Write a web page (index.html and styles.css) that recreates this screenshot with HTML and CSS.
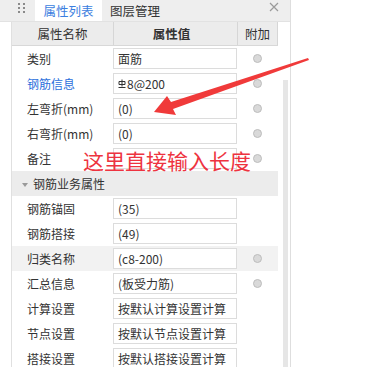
FILE: index.html
```html
<!DOCTYPE html>
<html lang="zh-CN">
<head>
    <meta charset="UTF-8">
    <title>属性列表</title>
    <link rel="stylesheet" href="styles.css">
</head>
<body>
    <div class="panel">
        <div class="tabbar">
            <div class="handle"><i></i><i></i><i></i><i></i><i></i><i></i></div>
            <div class="tab active">属性列表</div>
            <div class="tab">图层管理</div>
            <svg class="close" width="10" height="10" viewBox="0 0 10 10">
                <path d="M1 1L9 9M9 1L1 9" stroke="#9a9a9a" stroke-width="1.2" fill="none"/>
            </svg>
        </div>
        <div class="content">
            <div class="gutter"></div>
            <div class="grid">
                <div class="head">
                    <div class="hcell">属性名称</div>
                    <div class="hcell bold">属性值</div>
                    <div class="hcell last">附加</div>
                </div>
                <div class="row">
                    <div class="name">类别</div>
                    <div class="val"><div class="box">面筋</div></div>
                    <div class="extra"><span class="dot"></span></div>
                </div>
                <div class="row">
                    <div class="name link">钢筋信息</div>
                    <div class="val"><div class="box"><svg class="grade" width="8" height="11" viewBox="0 0 8 11"><path d="M4 0.5V7.5M1 2.5H7V5.5H1Z M0.5 8.5H7.5" stroke="#333" stroke-width="1" fill="none"/></svg>8@200</div></div>
                    <div class="extra"><span class="dot"></span></div>
                </div>
                <div class="row">
                    <div class="name">左弯折(mm)</div>
                    <div class="val"><div class="box">(0)</div></div>
                    <div class="extra"><span class="dot"></span></div>
                </div>
                <div class="row">
                    <div class="name">右弯折(mm)</div>
                    <div class="val"><div class="box">(0)</div></div>
                    <div class="extra"><span class="dot"></span></div>
                </div>
                <div class="row">
                    <div class="name">备注</div>
                    <div class="val"><div class="box"></div></div>
                    <div class="extra"><span class="dot"></span></div>
                </div>
                <div class="group">
                    <span class="caret"></span>钢筋业务属性
                </div>
                <div class="row">
                    <div class="name">钢筋锚固</div>
                    <div class="val"><div class="box">(35)</div></div>
                    <div class="extra"></div>
                </div>
                <div class="row">
                    <div class="name">钢筋搭接</div>
                    <div class="val"><div class="box">(49)</div></div>
                    <div class="extra"></div>
                </div>
                <div class="row hover">
                    <div class="name">归类名称</div>
                    <div class="val"><div class="box">(c8-200)</div></div>
                    <div class="extra"><span class="dot"></span></div>
                </div>
                <div class="row">
                    <div class="name">汇总信息</div>
                    <div class="val"><div class="box">(板受力筋)</div></div>
                    <div class="extra"><span class="dot"></span></div>
                </div>
                <div class="row">
                    <div class="name">计算设置</div>
                    <div class="val"><div class="box">按默认计算设置计算</div></div>
                    <div class="extra"></div>
                </div>
                <div class="row">
                    <div class="name">节点设置</div>
                    <div class="val"><div class="box">按默认节点设置计算</div></div>
                    <div class="extra"></div>
                </div>
                <div class="row">
                    <div class="name">搭接设置</div>
                    <div class="val"><div class="box">按默认搭接设置计算</div></div>
                    <div class="extra"></div>
                </div>
            </div>
            <div class="scroll"><div class="thumb"></div></div>
        </div>
    </div>

    <!-- annotation drawn on top of the screenshot -->
    <svg class="arrow" width="366" height="367" viewBox="0 0 366 367">
        <polygon points="308,58 171,102 167,96 154,112 176,115 173,109 309,60" fill="#f03a3a"/>
    </svg>
    <div class="note">这里直接输入长度</div>
</body>
</html>
```

FILE: styles.css
```css
body {
    margin: 0;
    background: #fff;
    font-family: "Noto Sans CJK SC", "Microsoft YaHei", sans-serif;
    font-size: 12px;
    color: #333;
    width: 366px;
    height: 367px;
    overflow: hidden;
}
.panel {
    width: 291px;
    height: 367px;
    border-right: 1px solid #dedede;
    box-sizing: border-box;
}
.tabbar {
    display: flex;
    align-items: stretch;
    height: 22px;
    background: #eeeeee;
    border-bottom: 1px solid #e2e2e2;
    box-sizing: border-box;
}
.handle {
    width: 35px;
    display: grid;
    grid-template-columns: 2px 2px;
    grid-auto-rows: 2px;
    column-gap: 3px;
    row-gap: 2px;
    padding: 3px 0 0 18px;
    box-sizing: border-box;
}
.handle i {
    background: #8a8a8a;
}
.tab {
    width: 67px;
    text-align: center;
    line-height: 21px;
    font-size: 12.5px;
}
.tab.active {
    background: #fff;
    color: #3b7ee0;
}
.tab + .tab {
    margin-left: 5px;
    width: 56px;
}
.close {
    margin: 2px 0 0 106px;
}
.content {
    display: flex;
}
.gutter {
    width: 11px;
    border-right: 1px solid #e0e0e0;
}
.grid {
    width: 266px;
}
.head {
    display: grid;
    grid-template-columns: 101px 124px 41px;
    height: 24px;
    background: #ececec;
    border-bottom: 1px solid #d8d8d8;
    box-sizing: border-box;
}
.hcell {
    text-align: center;
    line-height: 23px;
    font-size: 12.5px;
    border-left: 1px solid #d6d6d6;
    color: #333;
}
.hcell:first-child {
    border-left: none;
}
.hcell.bold {
    font-weight: bold;
    padding-right: 8px;
}
.hcell.last {
    border-right: 1px solid #d6d6d6;
}
.row {
    display: grid;
    grid-template-columns: 101px 124px 41px;
    height: 25px;
}
.row.hover {
    background: #f2f2f2;
}
.name {
    padding-left: 15px;
    line-height: 25px;
}
.name.link {
    color: #2b6fdc;
}
.box {
    margin-top: 2px;
    height: 21px;
    border: 1px solid #dcdcdc;
    box-sizing: border-box;
    background: #fff;
    padding-left: 4px;
    line-height: 19px;
    white-space: nowrap;
    overflow: hidden;
}
.grade {
    vertical-align: -1px;
    margin-right: 1px;
}
.extra {
    display: flex;
    align-items: center;
    justify-content: center;
}
.dot {
    width: 7px;
    height: 7px;
    border-radius: 50%;
    background: #d9d9d9;
    border: 1px solid #bdbdbd;
}
.group {
    height: 25px;
    line-height: 25px;
    background: #ececec;
    padding-left: 10px;
}
.caret {
    display: inline-block;
    width: 0;
    height: 0;
    border-left: 3px solid transparent;
    border-right: 3px solid transparent;
    border-top: 4px solid #999;
    margin-right: 5px;
    vertical-align: 2px;
}
.scroll {
    width: 12px;
    padding: 58px 0 0 5px;
    box-sizing: border-box;
}
.thumb {
    width: 5px;
    height: 300px;
    background: #e6e6e6;
}
.arrow {
    position: absolute;
    left: 0;
    top: 0;
}
.note {
    position: absolute;
    left: 83px;
    top: 147px;
    font-size: 21px;
    line-height: 26px;
    color: #ee3340;
    letter-spacing: 0;
}
```
